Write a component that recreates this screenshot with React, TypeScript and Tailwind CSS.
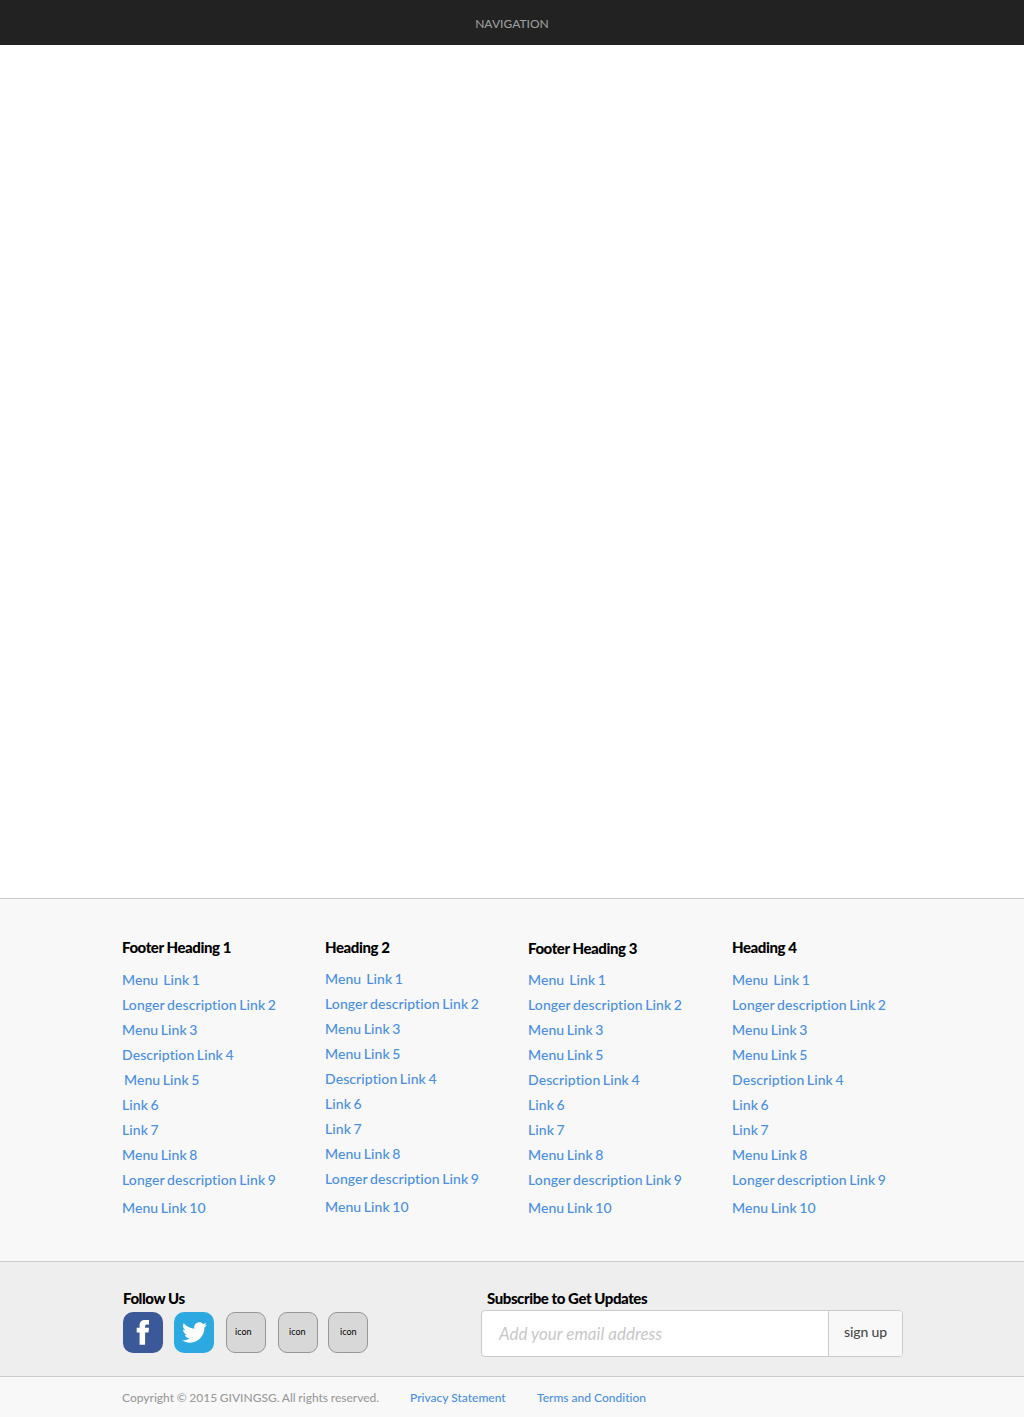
import { FaTwitter } from "react-icons/fa";

const columns = [
  {
    heading: "Footer Heading 1",
    width: "w-[203px]",
    headingClass: "mb-[7px]",
    links: ["Menu\u00a0 Link 1", "Longer description Link 2", "Menu Link 3", "Description Link 4", "Menu Link 5", "Link 6", "Link 7", "Menu Link 8", "Longer description Link 9", "Menu Link 10"],
    indented: 4,
  },
  {
    heading: "Heading 2",
    width: "w-[203px]",
    headingClass: "mb-[6px]",
    links: ["Menu\u00a0 Link 1", "Longer description Link 2", "Menu Link 3", "Menu Link 5", "Description Link 4", "Link 6", "Link 7", "Menu Link 8", "Longer description Link 9", "Menu Link 10"],
  },
  {
    heading: "Footer Heading 3",
    width: "w-[204px]",
    headingClass: "mt-px mb-[6px]",
    links: ["Menu\u00a0 Link 1", "Longer description Link 2", "Menu Link 3", "Menu Link 5", "Description Link 4", "Link 6", "Link 7", "Menu Link 8", "Longer description Link 9", "Menu Link 10"],
  },
  {
    heading: "Heading 4",
    width: "w-[203px]",
    headingClass: "mb-[7px]",
    links: ["Menu\u00a0 Link 1", "Longer description Link 2", "Menu Link 3", "Menu Link 5", "Description Link 4", "Link 6", "Link 7", "Menu Link 8", "Longer description Link 9", "Menu Link 10"],
  },
];

function FooterColumn({ column }: { column: (typeof columns)[number] }) {
  return (
    <section className={column.width}>
      <h2 className={`h-[25px] text-[15px] font-black leading-[24px] tracking-[-0.43px] text-black ${column.headingClass}`}>
        {column.heading}
      </h2>
      <ul className="font-medium tracking-[0.09px] [word-spacing:-1.1px]">
        {column.links.map((link, i) => (
          <li
            key={link}
            className={`h-[25px] leading-[25px] ${i === column.indented ? "pl-[2px]" : ""} ${i === 9 ? "mt-[3px]" : ""}`}
          >
            <a href="#">{link}</a>
          </li>
        ))}
      </ul>
    </section>
  );
}

function PlaceholderIcon({ className }: { className: string }) {
  return (
    <a
      href="#"
      className={`flex h-[41px] w-[40px] items-center rounded-[9px] border border-[#979797] bg-[#d8d8d8] pb-px text-[9px] text-black ${className}`}
    >
      icon
    </a>
  );
}

export default function App() {
  return (
    <div className="flex h-[1417px] w-full flex-col bg-white font-['Lato',sans-serif] text-[14px] text-[#4a90e2] [font-variant-ligatures:none]">
      <nav className="flex h-[45px] items-center justify-center bg-[#222222] pt-[2px] text-[12px] font-medium text-[#9b9b9b]">
        NAVIGATION
      </nav>
      <main className="flex-1" />
      <footer>
        <div className="flex h-[363px] border-t border-[#cbcbcb] bg-[#f8f8f8] pl-[122px] pt-[36px]">
          {columns.map((column) => (
            <FooterColumn key={column.heading} column={column} />
          ))}
        </div>
        <div className="flex h-[115px] border-t border-[#cbcbcb] bg-[#eeeeee] pl-[123px] pt-[24px]">
          <section className="w-[358px]">
            <h2 className="h-[25px] text-[15px] font-black leading-[25px] tracking-[-0.43px] text-black">Follow Us</h2>
            <div className="flex pt-px">
              <a href="#" aria-label="Facebook" className="mr-[11px] h-[41px] w-[40px] rounded-[10px] bg-[#3b5998]">
                <svg viewBox="0 0 40 40" className="h-[40px] w-[40px]" fill="#fff">
                  <path d="M16.6 32.7V20.4H13.7V15.8H16.6V13.6C16.6 9.8 18.6 8 22 8H26V12.6H23.8C22.4 12.6 22.1 13.3 22.1 14.4V15.8H26L25.5 20.4H22.1V32.7Z" />
                </svg>
              </a>
              <a href="#" aria-label="Twitter" className="mr-[12px] flex h-[41px] w-[40px] items-center justify-center rounded-[10px] bg-[#2ca9e1]">
                <FaTwitter className="h-[25px] w-[25px] text-white" />
              </a>
              <PlaceholderIcon className="mr-[12px] pl-[8px]" />
              <PlaceholderIcon className="mr-[10px] pl-[10px]" />
              <PlaceholderIcon className="pl-[11px]" />
            </div>
          </section>
          <section>
            <h2 className="h-[24px] pl-[6px] text-[15px] font-black leading-[25px] tracking-[-0.43px] text-black">
              Subscribe to Get Updates
            </h2>
            <form className="flex h-[47px] w-[422px] overflow-hidden rounded-[4px] border border-[#cbcbcb] bg-white">
              <input
                type="email"
                aria-label="Email address"
                placeholder="Add your email address"
                className="w-[346px] pl-[17px] pt-px text-[17px] italic outline-none placeholder:text-[#c8c8c8]"
              />
              <button type="button" className="flex-1 border-l border-[#cbcbcb] bg-[#f8f8f8] pb-[4px] text-[14px] font-medium tracking-[-0.15px] text-[#4a4a4a]">
                sign up
              </button>
            </form>
          </section>
        </div>
        <div className="flex h-[41px] items-center border-t border-[#cbcbcb] bg-[#f8f8f8] pl-[122px] pt-[2px] text-[12px] font-medium">
          <p className="w-[288px] text-[#9b9b9b] [word-spacing:-0.4px]">Copyright © 2015 GIVINGSG. All rights reserved.</p>
          <a href="#" className="w-[127px]">Privacy Statement</a>
          <a href="#">Terms and Condition</a>
        </div>
      </footer>
    </div>
  );
}
